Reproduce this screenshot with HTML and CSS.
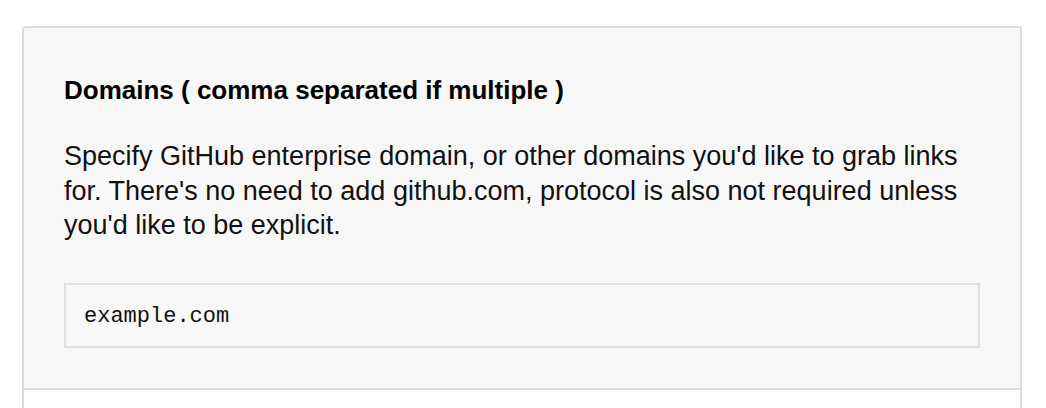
FILE: index.html
```html
<!DOCTYPE html>
<html>
<head>
<meta charset="utf-8">
<link rel="stylesheet" href="styles.css">
</head>
<body>
<div class="panel">
  <section class="field">
    <h3 class="field-title">Domains ( comma separated if multiple )</h3>
    <p class="field-help">Specify GitHub enterprise domain, or other domains you'd like to grab links for. There's no need to add github.com, protocol is also not required unless you'd like to be explicit.</p>
    <input class="field-input" type="text" placeholder="example.com">
  </section>
  <section class="field field-blank"></section>
</div>
</body>
</html>
```

FILE: styles.css
```css
html, body {
  margin: 0;
  padding: 0;
  background: #fff;
}
body {
  padding: 26px 24px 0 22px;
  font-family: "Liberation Sans", Arial, sans-serif;
  color: #111;
  overflow: hidden;
  height: 408px;
  box-sizing: border-box;
}
.panel {
  display: flex;
  flex-direction: column;
  height: 100%;
  box-sizing: border-box;
  border: 2px solid #ddd;
  border-bottom: none;
  border-radius: 4px 4px 0 0;
  overflow: hidden;
}
.field {
  background: #f7f7f7;
  padding: 47px 40px 40px;
  border-bottom: 2px solid #ddd;
}
.field-blank {
  flex: 1;
  background: #fff;
  padding: 0;
  border-bottom: none;
}
.field-title {
  margin: 0;
  font-size: 26px;
  line-height: 30px;
  font-weight: bold;
  color: #000;
}
.field-help {
  margin: 34px 0 40.5px;
  font-size: 27px;
  line-height: 34.5px;
  color: #111;
}
.field-input {
  display: block;
  box-sizing: border-box;
  width: 100%;
  height: 65px;
  margin: 0;
  padding: 2px 18px 0;
  border: 2px solid #e0e0e0;
  background: #f8f8f8;
  font-family: "Liberation Mono", "Courier New", monospace;
  font-size: 22px;
  color: #111;
  outline: none;
}
.field-input::placeholder {
  color: #111;
  opacity: 1;
}
```
